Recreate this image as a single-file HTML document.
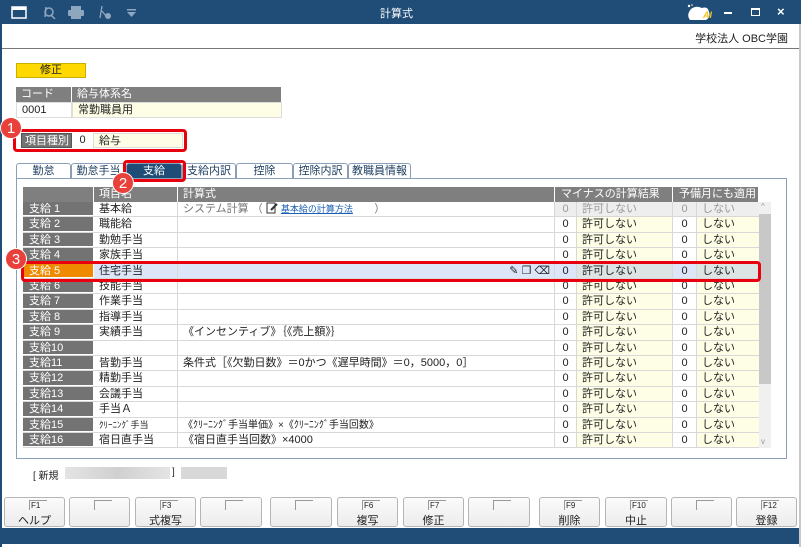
<!DOCTYPE html>
<html><head><meta charset="utf-8"><style>
*{box-sizing:border-box;margin:0;padding:0}
body{width:801px;height:547px;overflow:hidden;background:#fff;font-family:"Liberation Sans","Noto Sans CJK JP",sans-serif;font-size:11px;color:#222;position:relative}
.a{position:absolute}
.tb{left:0;top:0;width:801px;height:24px;background:#1f4d78;color:#fff}
.hdr{background:#7f7f7f;color:#fff;border-right:1px solid #fff}
.row{position:absolute;left:23px;width:736px;height:15.4px;border-bottom:1px solid #d8d8d8;background:#fff}
.row div{position:absolute;top:0;height:100%;line-height:15px;white-space:nowrap;overflow:hidden}
.lbl{left:0;width:71px;background:#737373;color:#fff;padding-left:6px;border-right:1px solid #fff;border-bottom:1px solid #fff}
.nm{left:71px;width:84px;padding-left:5px;border-right:1px solid #d8d8d8}
.fm{left:155px;width:377px;padding-left:5px;border-right:1px solid #d8d8d8}
.n1{left:532px;width:22px;text-align:center;border-right:1px solid #d8d8d8}
.t1{left:554px;width:96px;padding-left:5px;background:#fefee6;border-right:1px solid #d8d8d8}
.n2{left:650px;width:24px;text-align:center;border-right:1px solid #d8d8d8}
.t2{left:674px;width:62px;padding-left:5px;background:#fefee6}
.tab{position:absolute;top:163px;height:16px;border:1px solid #8aa0b8;border-bottom:none;border-radius:3px 3px 0 0;background:#fff;text-align:center;line-height:14px;color:#1f3f60}
.fk{position:absolute;top:497px;height:30px;border:1px solid #b5b5b5;border-radius:3px;background:linear-gradient(#fbfbfb,#ececec);font-size:10px;text-align:center}
.fk .k{position:absolute;left:24px;top:2px;width:18px;height:10px;border-left:1px solid #999;border-top:1px solid #999;font-size:8px;line-height:9px;text-align:left;padding-left:1px}
.fk .l{position:absolute;left:0;right:0;top:14px;font-size:11px}
.badge{position:absolute;z-index:5;width:22px;height:22px;border-radius:50%;background:#e8413c;color:#fff;font-size:15px;text-align:center;line-height:22px;border:1px solid #fff}
.red{position:absolute;z-index:4;border:3px solid #e8000f;border-radius:4px}
</style></head><body>
<div class="a tb">
 <svg class="a" style="left:11px;top:6px" width="16" height="13"><rect x="1" y="1" width="14" height="11" fill="none" stroke="#fff" stroke-width="1.5"/><rect x="1" y="1" width="14" height="3" fill="#fff"/></svg>
 <svg class="a" style="left:42px;top:5px" width="14" height="15"><circle cx="7" cy="7" r="4" fill="none" stroke="#8fa6bf" stroke-width="1.5"/><path d="M4 2 L3 12 M9 10l4 4" stroke="#8fa6bf" stroke-width="1.5"/></svg>
 <svg class="a" style="left:68px;top:6px" width="16" height="13"><rect x="3" y="0" width="10" height="4" fill="#8fa6bf"/><rect x="0" y="4" width="16" height="6" rx="1" fill="#8fa6bf"/><rect x="3" y="9" width="10" height="4" fill="#8fa6bf"/></svg>
 <svg class="a" style="left:97px;top:5px" width="16" height="15"><path d="M5 1 L3 13 M5 6 L9 11" stroke="#8fa6bf" stroke-width="1.3" fill="none"/><circle cx="11" cy="11" r="3" fill="#8fa6bf"/></svg>
 <svg class="a" style="left:127px;top:9px" width="9" height="8"><rect x="0" y="0" width="9" height="1.5" fill="#8fa6bf"/><path d="M0 3h9l-4.5 5z" fill="#8fa6bf"/></svg>
 <div class="a" style="left:380px;top:5px;font-size:11px">計算式</div>
 <svg class="a" style="left:686px;top:3px" width="30" height="20"><path d="M5 6 Q10 2 16 5 Q22 3 23 9 Q25 14 20 17 L4 17 Q0 12 5 6z" fill="#fff"/><circle cx="3" cy="3" r="1.2" fill="#fff"/><circle cx="6" cy="2" r="0.8" fill="#fff"/></svg>
 <div class="a" style="left:703px;top:10px;font-size:9px;font-weight:bold;font-style:italic;color:#f3c414">AI</div>
 <div class="a" style="left:724px;top:12px;width:8px;height:2px;background:#fff"></div>
 <div class="a" style="left:751px;top:8px;width:9px;height:8px;border:1.5px solid #fff;border-top-width:2.5px"></div>
 <div class="a" style="left:777px;top:4px;font-size:13px;font-weight:bold">×</div>
</div>
<div class="a" style="left:0;top:24px;width:2px;height:523px;background:#1f4d78"></div>
<div class="a" style="left:799px;top:24px;width:2px;height:523px;background:#c8c8c8"></div>
<div class="a" style="right:13px;top:30px">学校法人 OBC学園</div>
<div class="a" style="left:2px;top:48px;width:797px;height:1px;background:#777"></div>

<div class="a" style="left:16px;top:63px;width:70px;height:15px;background:#ffd800;border:1px solid #c9b000;text-align:center;line-height:13px">修正</div>
<div class="a hdr" style="left:16px;top:87px;width:56px;height:15px;padding-left:5px;line-height:14px">コード</div>
<div class="a hdr" style="left:72px;top:87px;width:210px;height:15px;padding-left:5px;line-height:14px">給与体系名</div>
<div class="a" style="left:16px;top:102px;width:56px;height:16px;padding-left:5px;line-height:15px;border:1px solid #ddd;background:#fff">0001</div>
<div class="a" style="left:72px;top:102px;width:210px;height:16px;padding-left:5px;line-height:15px;background:#fefee6;border:1px solid #ddd">常勤職員用</div>

<div class="a" style="left:21px;top:133px;width:51px;height:15px;background:#737373;color:#fff;padding-left:3px;line-height:14px;border:1px solid #555">項目種別</div>
<div class="a" style="left:72px;top:133px;width:21px;height:15px;text-align:center;line-height:14px;background:#fff">0</div>
<div class="a" style="left:93px;top:133px;width:90px;height:15px;padding-left:5px;line-height:14px;background:#fefee6;border:1px solid #ddd">給与</div>
<div class="red" style="left:13px;top:129px;width:174px;height:23px"></div>
<div class="badge" style="left:0;top:117px">1</div>

<div class="tab" style="left:16px;width:55px">勤怠</div>
<div class="tab" style="left:71px;width:55px">勤怠手当</div>
<div class="tab" style="left:126px;width:56px;background:#1f4d78;color:#fff">支給</div>
<div class="tab" style="left:182px;width:54px">支給内訳</div>
<div class="tab" style="left:236px;width:57px">控除</div>
<div class="tab" style="left:293px;width:55px">控除内訳</div>
<div class="tab" style="left:348px;width:63px">教職員情報</div>
<div class="red" style="left:123px;top:160px;width:63px;height:22px"></div>

<div class="a" style="left:16px;top:178px;width:771px;height:281px;border:1px solid #8aa0b8;background:#fff"></div>
<div class="badge" style="left:112px;top:172px">2</div>
<div class="a hdr" style="left:23px;top:187px;width:71px;height:15px"></div>
<div class="a hdr" style="left:94px;top:187px;width:84px;height:15px;padding-left:5px;line-height:14px">項目名</div>
<div class="a hdr" style="left:178px;top:187px;width:377px;height:15px;padding-left:5px;line-height:14px">計算式</div>
<div class="a hdr" style="left:555px;top:187px;width:118px;height:15px;padding-left:6px;line-height:14px">マイナスの計算結果 <span style="display:inline-block;width:11px;height:11px;border-radius:50%;background:#3a9ad9;color:#fff;font-size:9px;text-align:center;line-height:11px;font-weight:bold">i</span></div>
<div class="a hdr" style="left:673px;top:187px;width:86px;height:15px;padding-left:6px;line-height:14px">予備月にも適用</div>

<div class="row" style="top:202px;background:#fff"><div class="lbl">支給 1</div><div class="nm">基本給</div><div class="fm" style="color:#777">システム計算 （ <svg width="12" height="12" style="vertical-align:-2px"><rect x="1" y="1" width="8" height="10" fill="none" stroke="#333"/><path d="M5 8 L11 2" stroke="#333" stroke-width="2"/></svg> <span style="color:#1a5fb4;text-decoration:underline;font-size:9px">基本給の計算方法</span> &nbsp; &nbsp; &nbsp; ）</div><div class="n1" style="background:#eee;color:#999">0</div><div class="t1" style="background:#eee;color:#999">許可しない</div><div class="n2" style="background:#eee;color:#999">0</div><div class="t2" style="background:#eee;color:#999">しない</div></div>
<div class="row" style="top:217.4px"><div class="lbl">支給 2</div><div class="nm">職能給</div><div class="fm"></div><div class="n1">0</div><div class="t1">許可しない</div><div class="n2">0</div><div class="t2">しない</div></div>
<div class="row" style="top:232.8px"><div class="lbl">支給 3</div><div class="nm">勤勉手当</div><div class="fm"></div><div class="n1">0</div><div class="t1">許可しない</div><div class="n2">0</div><div class="t2">しない</div></div>
<div class="row" style="top:248.2px"><div class="lbl">支給 4</div><div class="nm">家族手当</div><div class="fm"></div><div class="n1">0</div><div class="t1">許可しない</div><div class="n2">0</div><div class="t2">しない</div></div>
<div class="row" style="top:263.6px;background:#dde6f8"><div class="lbl" style="background:#ef8a00">支給 5</div><div class="nm">住宅手当</div><div class="fm" style="text-align:right;padding-right:4px">✎ ❐ ⌫</div><div class="n1">0</div><div class="t1" style="background:#dde4e4">許可しない</div><div class="n2">0</div><div class="t2" style="background:#dde4e4">しない</div></div>
<div class="row" style="top:279px"><div class="lbl">支給 6</div><div class="nm">技能手当</div><div class="fm"></div><div class="n1">0</div><div class="t1">許可しない</div><div class="n2">0</div><div class="t2">しない</div></div>
<div class="row" style="top:294.4px"><div class="lbl">支給 7</div><div class="nm">作業手当</div><div class="fm"></div><div class="n1">0</div><div class="t1">許可しない</div><div class="n2">0</div><div class="t2">しない</div></div>
<div class="row" style="top:309.8px"><div class="lbl">支給 8</div><div class="nm">指導手当</div><div class="fm"></div><div class="n1">0</div><div class="t1">許可しない</div><div class="n2">0</div><div class="t2">しない</div></div>
<div class="row" style="top:325.2px"><div class="lbl">支給 9</div><div class="nm">実績手当</div><div class="fm">《インセンティブ》｛《売上額》｝</div><div class="n1">0</div><div class="t1">許可しない</div><div class="n2">0</div><div class="t2">しない</div></div>
<div class="row" style="top:340.6px"><div class="lbl">支給10</div><div class="nm"></div><div class="fm"></div><div class="n1">0</div><div class="t1">許可しない</div><div class="n2">0</div><div class="t2">しない</div></div>
<div class="row" style="top:356px"><div class="lbl">支給11</div><div class="nm">皆勤手当</div><div class="fm">条件式［《欠勤日数》＝0かつ《遅早時間》＝0，5000，0］</div><div class="n1">0</div><div class="t1">許可しない</div><div class="n2">0</div><div class="t2">しない</div></div>
<div class="row" style="top:371.4px"><div class="lbl">支給12</div><div class="nm">精勤手当</div><div class="fm"></div><div class="n1">0</div><div class="t1">許可しない</div><div class="n2">0</div><div class="t2">しない</div></div>
<div class="row" style="top:386.8px"><div class="lbl">支給13</div><div class="nm">会議手当</div><div class="fm"></div><div class="n1">0</div><div class="t1">許可しない</div><div class="n2">0</div><div class="t2">しない</div></div>
<div class="row" style="top:402.2px"><div class="lbl">支給14</div><div class="nm">手当Ａ</div><div class="fm"></div><div class="n1">0</div><div class="t1">許可しない</div><div class="n2">0</div><div class="t2">しない</div></div>
<div class="row" style="top:417.6px"><div class="lbl">支給15</div><div class="nm" style="font-size:9px">ｸﾘｰﾆﾝｸﾞ手当</div><div class="fm" style="font-size:10px">《ｸﾘｰﾆﾝｸﾞ手当単価》×《ｸﾘｰﾆﾝｸﾞ手当回数》</div><div class="n1">0</div><div class="t1">許可しない</div><div class="n2">0</div><div class="t2">しない</div></div>
<div class="row" style="top:433px"><div class="lbl">支給16</div><div class="nm">宿日直手当</div><div class="fm">《宿日直手当回数》×4000</div><div class="n1">0</div><div class="t1">許可しない</div><div class="n2">0</div><div class="t2">しない</div></div>

<div class="a" style="left:759px;top:202px;width:12px;height:246px;background:#f0f0f0"></div>
<div class="a" style="left:759px;top:214px;width:12px;height:170px;background:#c8c8c8"></div>
<div class="a" style="left:761px;top:202px;font-size:8px;color:#999">^</div>
<div class="a" style="left:761px;top:437px;font-size:8px;color:#999">v</div>

<div class="red" style="left:21px;top:261px;width:740px;height:21px"></div>
<div class="badge" style="left:5px;top:248px">3</div>

<div class="a" style="left:33px;top:467px;font-size:10px">[ 新規</div>
<div class="a" style="left:65px;top:467px;width:105px;height:12px;background:linear-gradient(90deg,#e4e4e4,#d0d0d0,#e4e4e4)"></div>
<div class="a" style="left:172px;top:467px;font-size:10px">]</div>
<div class="a" style="left:181px;top:467px;width:46px;height:12px;background:#d8d8d8"></div>

<div class="fk" style="left:4px;width:61px"><div class="k">F1</div><div class="l">ヘルプ</div></div>
<div class="fk" style="left:69px;width:61px"><div class="k"></div></div>
<div class="fk" style="left:135px;width:61px"><div class="k">F3</div><div class="l">式複写</div></div>
<div class="fk" style="left:200px;width:62px"><div class="k"></div></div>
<div class="fk" style="left:270px;width:62px"><div class="k"></div></div>
<div class="fk" style="left:337px;width:61px"><div class="k">F6</div><div class="l">複写</div></div>
<div class="fk" style="left:403px;width:61px"><div class="k">F7</div><div class="l">修正</div></div>
<div class="fk" style="left:468px;width:62px"><div class="k"></div></div>
<div class="fk" style="left:539px;width:61px"><div class="k">F9</div><div class="l">削除</div></div>
<div class="fk" style="left:605px;width:62px"><div class="k">F10</div><div class="l">中止</div></div>
<div class="fk" style="left:671px;width:61px"><div class="k"></div></div>
<div class="fk" style="left:736px;width:61px"><div class="k">F12</div><div class="l">登録</div></div>
<div class="a" style="left:2px;top:528px;width:797px;height:16px;background:#1f4d78"></div>
</body></html>
